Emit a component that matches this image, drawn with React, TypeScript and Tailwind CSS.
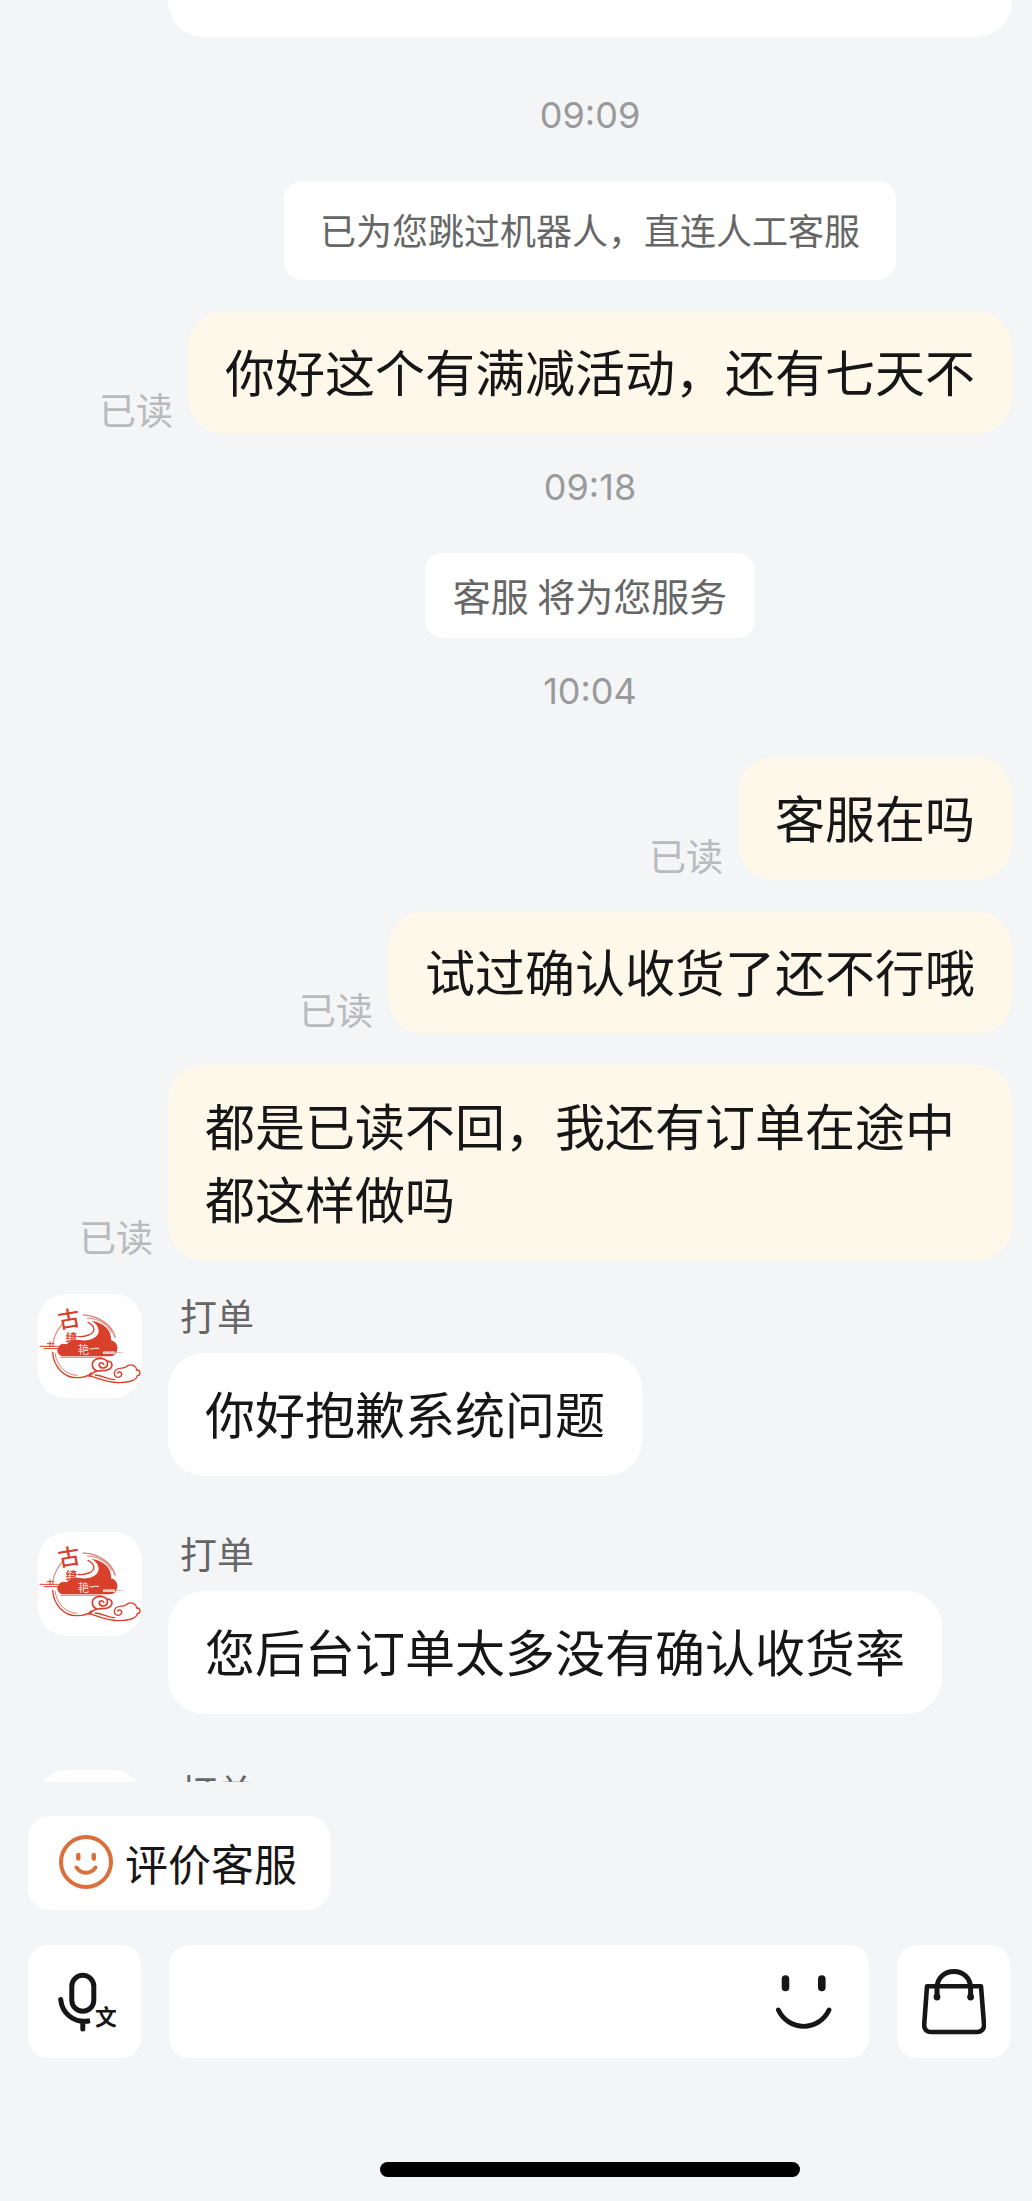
import React from "react";

type Entry =
	| { kind: "time"; text: string }
	| { kind: "notice"; text: string; wide?: boolean }
	| { kind: "mine"; text: string }
	| { kind: "agent"; text?: string };

const entries: Entry[] = [
	{ kind: "time", text: "09:09" },
	{ kind: "notice", text: "已为您跳过机器人，直连人工客服", wide: true },
	{ kind: "mine", text: "你好这个有满减活动，还有七天不" },
	{ kind: "time", text: "09:18" },
	{ kind: "notice", text: "客服 将为您服务" },
	{ kind: "time", text: "10:04" },
	{ kind: "mine", text: "客服在吗" },
	{ kind: "mine", text: "试过确认收货了还不行哦" },
	{ kind: "mine", text: "都是已读不回，我还有订单在途中都这样做吗" },
	{ kind: "agent", text: "你好抱歉系统问题" },
	{ kind: "agent", text: "您后台订单太多没有确认收货率" },
	{ kind: "agent" },
];

const ShopLogo = () => (
	<svg
		viewBox="24 27 312 312"
		className="size-[104px] shrink-0 rounded-[28px] bg-white"
		fill="none"
		stroke="#d8402c"
		strokeLinecap="round"
		aria-hidden="true"
	>
		{/* moon ring */}
		<path d="M96 118C80 136 70 160 68 182" strokeWidth="4" stroke="#dd8f86" />
		<path d="M160 90C208 92 246 122 255 156" strokeWidth="5" stroke="#d98d85" />
		<path d="M172 99C206 100 232 118 244 142" strokeWidth="2" />
		<path d="M68 202C70 244 102 280 142 278C160 278 174 274 184 264" strokeWidth="4" />
		<path d="M75 204C80 242 106 270 142 271" strokeWidth="2" />
		{/* red cloud */}
		<path
			d="M184 108C222 112 246 138 243 166C262 170 268 192 257 205C254 211 248 214 240 214H104C86 214 78 200 84 188C88 178 100 174 110 178C120 164 142 162 156 166C182 168 206 156 206 138C206 124 196 114 184 108Z"
			fill="#d8402c"
			stroke="none"
		/>
		<path d="M174 112C196 122 198 142 176 150C162 155 152 156 144 154" strokeWidth="4" />
		<path d="M30 184H84M42 191H84M52 176H72M60 170V186" strokeWidth="3" />
		<path d="M92 217H214" strokeWidth="2" />
		<path d="M180 191C186 196 192 187 206 190" stroke="#fff" strokeWidth="3" />
		<path d="M222 203H252" stroke="#fff" strokeWidth="7" />
		<path d="M224 203H280" stroke="#c9aaa5" strokeWidth="3" strokeDasharray="3 4" />
		{/* curling cloud */}
		<path
			d="M202 258C184 252 182 230 198 223C216 216 236 224 232 240C229 251 212 252 208 242C206 234 216 230 221 237M234 228C252 232 248 250 232 255C224 258 212 256 202 258C192 260 184 266 178 274"
			strokeWidth="5"
		/>
		<path
			d="M178 272C204 280 232 294 268 293C300 292 320 284 322 272C334 270 332 254 320 255C318 240 298 234 288 246C282 252 262 246 255 258C248 272 262 282 272 274C280 266 270 256 263 264"
			strokeWidth="4"
		/>
		<path d="M196 270C220 272 232 284 254 284" strokeWidth="4" />
		<g stroke="none" className="font-['Noto_Sans_CJK_SC',sans-serif]">
			<text x="84" y="126" fontSize="66" fontWeight="500" fill="#d8402c" transform="rotate(-10 118 104)">
				古
			</text>
			<text x="107" y="170" fontSize="34" fontWeight="700" fill="#d8402c">
				绮
			</text>
			<text x="143" y="206" fontSize="34" fill="#f9e0dc">
				艳
			</text>
		</g>
	</svg>
);

const SmileBadge = () => (
	<svg
		viewBox="0 0 54 54"
		className="size-[54px]"
		fill="none"
		stroke="#d9703c"
		strokeWidth="4"
		strokeLinecap="round"
		aria-hidden="true"
	>
		<circle cx="27" cy="27" r="25" />
		<path d="M19.3 20V23.5M34.8 20V23.5" strokeWidth="4.4" />
		<path d="M17.5 32.5A11.3 11.3 0 0 0 36.5 32.5" />
	</svg>
);

const VoiceIcon = () => (
	<svg viewBox="0 0 58 60" className="h-[60px] w-[58px]" fill="none" stroke="#161616" strokeWidth="5" aria-hidden="true">
		<rect x="13.8" y="3.2" width="22" height="36" rx="11" />
		<path d="M2.7 27.5C4 41 15 50.5 29 49.2" strokeLinecap="round" />
		<path d="M29 49.2L32 48.6" />
		<path d="M24.8 50V57" strokeLinecap="round" />
		<text
			x="37"
			y="53"
			fontSize="22"
			fill="#161616"
			stroke="none"
			className="font-['Noto_Sans_CJK_SC',sans-serif] font-bold"
		>
			文
		</text>
	</svg>
);

const SmileIcon = () => (
	<svg viewBox="0 0 56 56" className="size-14" fill="none" stroke="#161616" strokeLinecap="round" aria-hidden="true">
		<path d="M9.5 5V13.5M45.8 5V13.5" strokeWidth="7.6" />
		<path d="M2.4 36A27.8 27.8 0 0 0 53 36" strokeWidth="4.8" />
	</svg>
);

const BagIcon = () => (
	<svg
		viewBox="0 0 64 66"
		className="h-[66px] w-16"
		fill="none"
		stroke="#161616"
		strokeWidth="5"
		strokeLinejoin="round"
		aria-hidden="true"
	>
		<path d="M5 17.3H59L62 55.5C62.3 60 59.5 63 55 63H9C4.5 63 1.9 60 2.2 55.5Z" strokeWidth="4.6" />
		<path d="M15 27V19C15 9 22.5 2.6 31.8 2.6S48.6 9 48.6 19V27" />
		<circle cx="15" cy="28" r="3.4" fill="#161616" stroke="none" />
		<circle cx="48.6" cy="28" r="3.4" fill="#161616" stroke="none" />
	</svg>
);

const Bubble = ({ text, className }: { text: string; className: string }) => (
	<p className={`rounded-[36px] px-[37px] pt-[23px] pb-[27px] text-[50px] leading-[73px] text-[#161616] ${className}`}>
		{text}
	</p>
);

const Row = ({ entry }: { entry: Entry }) => {
	switch (entry.kind) {
		case "time":
			return (
				<time className="pt-0.5 pr-5 pb-[15px] pl-[168px] text-center font-['Inter',sans-serif] text-[36px] leading-10 text-[#999a9b]">
					{entry.text}
				</time>
			);
		case "notice":
			return (
				<div className="flex justify-center pr-5 pl-[168px]">
					<p
						className={`rounded-[18px] bg-white text-[#666] ${
							entry.wide
								? "px-9 pt-[25px] pb-[27px] text-[36px] leading-[47px]"
								: "px-7 pt-[18px] pb-5 text-[38px] leading-[47px]"
						}`}
					>
						{entry.text}
					</p>
				</div>
			);
		case "mine":
			return (
				<div className="flex items-end justify-end gap-[15px] pr-5 pl-6">
					<span className="shrink-0 pb-[5px] text-[37px] leading-10 text-[#b9babb]">已读</span>
					<Bubble text={entry.text} className="max-w-[844px] bg-[#fef8eb]" />
				</div>
			);
		case "agent":
			return (
				<div className="flex items-start gap-[26px] pt-0.5 pr-5 pb-[23px] pl-[38px]">
					<ShopLogo />
					<div className="flex flex-col items-start">
						<span className="mb-[17px] pl-3 text-[37px] leading-[42px] text-[#666]">打单</span>
						{entry.text && <Bubble text={entry.text} className="bg-white" />}
					</div>
				</div>
			);
	}
};

const App = () => {
	return (
		<div className="flex h-screen flex-col bg-[#f3f5f7] font-['Noto_Sans_CJK_SC',sans-serif]">
			<main className="flex min-h-0 flex-1 flex-col gap-[31px] overflow-hidden">
				<div className="mr-5 mb-[25px] ml-[168px] h-[37px] shrink-0 rounded-b-[36px] bg-white" />
				{entries.map((entry, i) => (
					<Row key={i} entry={entry} />
				))}
			</main>

			<footer className="shrink-0 pt-[34px] pr-[22px] pb-6 pl-7">
				<button
					type="button"
					className="flex items-center gap-3 rounded-[22px] bg-white pt-[19px] pr-[33px] pb-[21px] pl-[31px] text-[43px] leading-[54px] text-[#161616]"
				>
					<SmileBadge />
					评价客服
				</button>

				<div className="mt-[35px] flex items-center gap-7">
					<button
						type="button"
						aria-label="语音输入"
						className="flex size-[113px] shrink-0 items-center justify-center rounded-[20px] bg-white pl-1"
					>
						<VoiceIcon />
					</button>
					<div className="flex h-[113px] min-w-0 flex-1 items-center rounded-[20px] bg-white pr-[37px]">
						<input
							type="text"
							aria-label="输入消息"
							className="h-full min-w-0 flex-1 bg-transparent px-8 text-[43px] text-[#161616] outline-none"
						/>
						<button type="button" aria-label="表情">
							<SmileIcon />
						</button>
					</div>
					<button
						type="button"
						aria-label="购物袋"
						className="flex size-[113px] shrink-0 items-center justify-center rounded-[20px] bg-white"
					>
						<BagIcon />
					</button>
				</div>

				<div className="mt-[104px] flex justify-center pl-[142px]">
					<div className="h-[15px] w-[420px] rounded-full bg-black" />
				</div>
			</footer>
		</div>
	);
};

export default App;
